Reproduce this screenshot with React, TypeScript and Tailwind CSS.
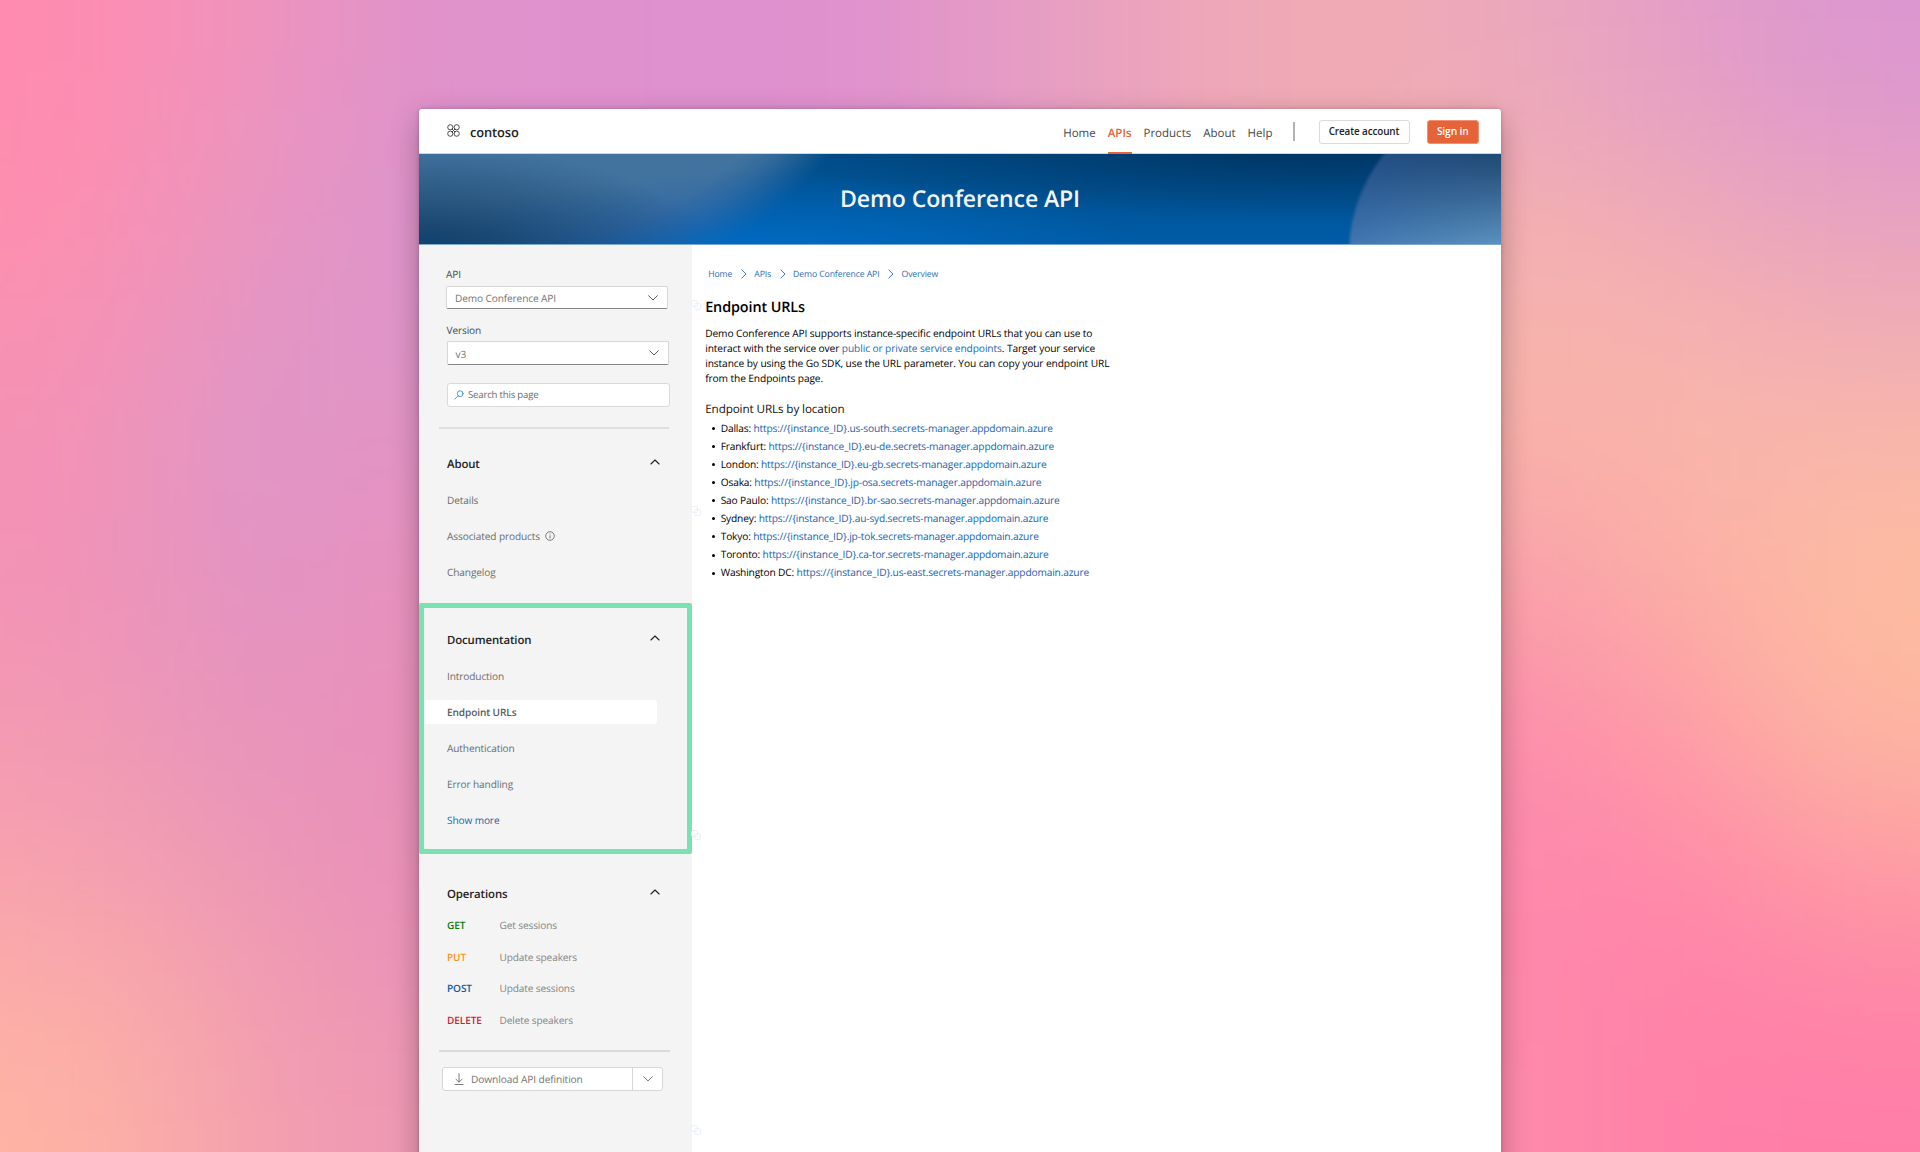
import React from 'react';

const meshColors: string[] = [
  '#ff8bb0', '#f095bc', '#e092ca', '#df92cd', '#de8fd0', '#df92cd', '#e79ec3', '#eea7b9', '#f0acb2', '#eca8bd', '#e49ec6', '#dc97d0',
  '#fd90b0', '#e896be', '#dc94cd', '#dd92cd', '#dd92cd', '#df92cd', '#e79ec3', '#eea7b9', '#f0acb2', '#f6b2ae', '#f2acb4', '#eba5bd',
  '#f592b4', '#de97c9', '#e293c5', '#e293c5', '#e293c5', '#e293c5', '#e79ec3', '#eea7b9', '#f4b0b0', '#fab4a9', '#f9b6aa', '#f7b5ad',
  '#f392b5', '#e095c5', '#e991bd', '#e991bd', '#e991bd', '#e991bd', '#eea7b9', '#eea7b9', '#f8a6ac', '#fa9fab', '#fbb0a6', '#febca0',
  '#f39ab3', '#e694bc', '#e990ba', '#e990ba', '#e990ba', '#e990ba', '#eea7b9', '#f4a0ae', '#fd8cac', '#fd8cac', '#fe9aa6', '#fdb7a2',
  '#f9a4ad', '#ef9ab4', '#ea90b9', '#ea90b9', '#ea90b9', '#ea90b9', '#ee97b9', '#f494ae', '#fd88ae', '#fe88ac', '#ff84aa', '#fe94a5',
  '#feb3a4', '#f5a1ae', '#ee97b5', '#ee97b5', '#ee97b5', '#ee97b5', '#ee97b5', '#f497ae', '#fe90aa', '#fe8bab', '#ff7fa8', '#ff7ea8',
];

const regions: [string, string][] = [
  ['Dallas', 'us-south'],
  ['Frankfurt', 'eu-de'],
  ['London', 'eu-gb'],
  ['Osaka', 'jp-osa'],
  ['Sao Paulo', 'br-sao'],
  ['Sydney', 'au-syd'],
  ['Tokyo', 'jp-tok'],
  ['Toronto', 'ca-tor'],
  ['Washington DC', 'us-east'],
];

const operations: [string, string, string][] = [
  ['GET', 'text-[#107c10]', 'Get sessions'],
  ['PUT', 'text-[#ff9214]', 'Update speakers'],
  ['POST', 'text-[#1058a8]', 'Update sessions'],
  ['DELETE', 'text-[#cf1f33]', 'Delete speakers'],
];

type IconProps = { className?: string };

function Chevron({ className = '' }: IconProps) {
  return (
    <svg viewBox="0 0 10 6" className={`h-[6px] w-[10px] ${className}`} fill="none" stroke="currentColor" strokeWidth=".9" strokeLinecap="round" strokeLinejoin="round">
      <path d="M.7.7 5 5 9.3.7" />
    </svg>
  );
}

function ChevronUp() {
  return (
    <svg viewBox="0 0 10 6" className="h-[6px] w-[10px] text-[#222]" fill="none" stroke="currentColor" strokeWidth="1.1" strokeLinecap="round" strokeLinejoin="round">
      <path d="M.9 5 5 1l4.100 4" />
    </svg>
  );
}

function CrumbArrow({ className = '' }: IconProps) {
  return (
    <svg viewBox="0 0 6 10" className={`h-[10px] w-[6px] ${className}`} fill="none" stroke="#2a6db5" strokeWidth=".9" strokeLinecap="round" strokeLinejoin="round">
      <path d="M.8.9 5 5 .8 9.100" />
    </svg>
  );
}

function Logo() {
  return (
    <svg viewBox="0 0 13 13" className="-mt-px h-[13px] w-[13px]" fill="none" stroke="#3b3b3b" strokeWidth=".9">
      <circle cx="3.300" cy="3.300" r="2.600" />
      <circle cx="9.700" cy="3.300" r="2.600" />
      <circle cx="3.300" cy="9.700" r="2.600" />
      <circle cx="9.700" cy="9.700" r="2.600" />
      <path d="m4.800 4.800 3.400 3.400M8.200 4.800 4.800 8.200" />
    </svg>
  );
}

function SearchIcon() {
  return (
    <svg viewBox="0 0 10 10" className="h-[10px] w-[10px]" fill="none" stroke="#2f8fd8" strokeWidth=".9" strokeLinecap="round">
      <circle cx="6.200" cy="3.700" r="2.900" />
      <path d="M4.100 5.800.7 9.200" />
    </svg>
  );
}

function InfoIcon() {
  return (
    <svg viewBox="0 0 10 10" className="-mt-px h-[10px] w-[10px]" fill="none" stroke="#5c5c5c" strokeWidth=".8">
      <circle cx="5" cy="5" r="4.300" />
      <path d="M5 4.400v3M5 2.600v.9" />
    </svg>
  );
}

function DownloadIcon() {
  return (
    <svg viewBox="0 0 10 12" className="h-[12px] w-[10px]" fill="none" stroke="#6b6b6b" strokeWidth=".9">
      <path d="M5 .3v8.900M1.700 6 5 9.200 8.300 6M.6 11.500h8.800" />
    </svg>
  );
}

function CopyMark({ className }: { className: string }) {
  return (
    <svg viewBox="0 0 10 10" className={`absolute h-[10px] w-[10px] ${className}`} fill="none" stroke="#e6edf5" strokeWidth=".9">
      <rect x=".6" y=".6" width="5.800" height="5.800" rx="1" />
      <rect x="3.600" y="3.600" width="5.800" height="5.800" rx="1" />
    </svg>
  );
}

function SectionTitle({ children, className }: { children: React.ReactNode; className: string }) {
  return (
    <div className={`flex h-5 items-center justify-between text-[11.400px] font-semibold text-[#222] ${className}`}>
      <h3 className="pt-[2px]">{children}</h3>
      <span className="-mt-[4px] pr-px"><ChevronUp /></span>
    </div>
  );
}

function Row({ children, className = 'text-[#6c6c6c]' }: { children: React.ReactNode; className?: string }) {
  return <li className={`flex h-9 items-center ${className}`}>{children}</li>;
}

function Select({ children, className }: { children: React.ReactNode; className: string }) {
  return (
    <div className={`flex w-[222px] items-center justify-between rounded-[2px] border border-[#d6d6d6] border-b-[#858585] bg-white pr-[9px] pl-2 text-[10.100px] text-[#757575] ${className}`}>
      <span className="pt-[3px]">{children}</span>
      <Chevron className="text-[#4a4a4a]" />
    </div>
  );
}

export default function App() {
  return (
    <div className="relative h-[1152px] w-[1920px] overflow-hidden bg-[#e991bd] pt-[109px] font-['Open_Sans','Noto_Sans',sans-serif] tracking-[-0.007em] [text-rendering:geometricPrecision]">
      <div className="absolute -inset-[240px] grid grid-cols-[400px_repeat(10,160px)_400px] grid-rows-[405px_repeat(5,164.400px)_405px] blur-[85px]">
        {meshColors.map((color, i) => (
          <span key={i} style={{ backgroundColor: color }} />
        ))}
      </div>

      <div className="relative mx-auto flex h-[1100px] w-[1082px] flex-col rounded-t-[3px] bg-white shadow-[0_10px_30px_rgba(0,0,0,0.28),0_0_4px_rgba(0,0,0,0.2)]">
        <header className="flex h-[45px] shrink-0 items-center border-b border-[#cfd6de] pr-[22.500px] pl-[27.500px]">
          <Logo />
          <span className="mt-[3.500px] ml-[10.500px] text-[12.900px] font-semibold text-[#222]">contoso</span>
          <nav className="ml-auto flex h-full items-center gap-[12px] text-[11.500px] tracking-normal text-[#484848]">
            <span className="mt-[4.500px]">Home</span>
            <span className="relative flex h-full items-center pt-[4.500px] font-semibold text-[#e56336]">
              APIs
              <i className="absolute inset-x-0 -bottom-px h-[2.500px] bg-[#e56336]" />
            </span>
            <span className="mt-[4.500px]">Products</span>
            <span className="mt-[4.500px]">About</span>
            <span className="mt-[4.500px]">Help</span>
          </nav>
          <span className="ml-[20.500px] h-[19px] w-[1.500px] bg-[#b3b3b3]" />
          <button className="mt-px ml-[24px] flex h-6 w-[91px] items-center justify-center rounded-[3px] border border-[#dadada] text-[9.900px] font-semibold text-[#222]">Create account</button>
          <button className="mt-px ml-[17.500px] flex h-6 w-[51.500px] items-center justify-center rounded-[3px] border border-[#ee9272] bg-[#e56336] pt-px text-[10.200px] font-semibold text-white">Sign in</button>
        </header>

        <section className="relative flex h-[91px] shrink-0 items-center justify-center overflow-hidden border-b border-[#7ea9cf] bg-[radial-gradient(ellipse_560px_74px_at_900px_-8px,#003360_0%,#003360a0_35%,#00336000_100%),radial-gradient(ellipse_400px_80px_at_330px_100px,#006cc4_0%,#006cc400_100%),linear-gradient(180deg,#004f8c_0%,#005ba6_100%)]">
          <div className="absolute -top-[638px] -left-[288px] h-[776px] w-[776px] bg-[radial-gradient(ellipse_300px_110px_at_288px_740px,#0c365c_0%,#0f3a60d0_20%,#0f3a6000_100%),linear-gradient(172deg,#42739f_83%,#2f69a9_89%,#1b64b6_93%)] [mask-image:radial-gradient(circle_400px_at_center,#000_84%,#000b_90%,#0000_100%)]" />
          <div className="absolute top-[-60px] left-[930px] h-[320px] w-[320px] rounded-full bg-[linear-gradient(105deg,#2456a090_0%,#2456a000_45%),linear-gradient(180deg,#234a72_19%,#3f6d98_33%,#5f93c0_47%)] opacity-95 blur-[1.500px]" />
          <h1 className="relative -mt-px text-[23.100px] font-semibold tracking-[-0.006em] text-[#f4f7fa]">Demo Conference API</h1>
        </section>

        <div className="relative flex min-h-0 flex-1">
          <aside className="flex w-[272.500px] shrink-0 flex-col bg-[#f4f4f4] pt-[21px] text-[10.100px]">
            <div className="pl-[27px]">
              <label className="block h-4 leading-4 text-[#484848]">API</label>
              <Select className="mt-1 h-[23px]">Demo Conference API</Select>
              <label className="mt-[13px] block h-4 pl-[.5px] leading-4 text-[#484848]">Version</label>
              <Select className="mt-[3px] ml-[.5px] h-6">v3</Select>
              <div className="mt-[17.500px] ml-[.5px] flex h-6 w-[223px] items-center gap-[4.500px] rounded-[3px] border border-[#dadada] bg-white pl-[6px] text-[9.600px] tracking-[-0.02em] text-[#6c6c6c]">
                <SearchIcon />
                <span className="pt-[2px]">Search this page</span>
              </div>
            </div>
            <hr className="mt-[20.500px] ml-[19.500px] h-[1.500px] w-[230.500px] border-0 bg-[#dfdfdf]" />

            <SectionTitle className="mt-[25px] pr-[31px] pl-[28px]">About</SectionTitle>
            <ul className="mt-[9px] pl-[28px]">
              <Row>Details</Row>
              <Row><span className="mr-[5px]">Associated products</span><InfoIcon /></Row>
              <Row>Changelog</Row>
            </ul>

            <div className="mt-[12.500px] h-[250.500px] shrink-0 rounded-[2px] border-[5px] border-[#7ae1b0] pt-[22px]">
              <SectionTitle className="pr-[26px] pl-[23px]">Documentation</SectionTitle>
              <ul className="mt-[8.500px]">
                <Row className="pl-[23px] text-[#6c6c6c]">Introduction</Row>
                <Row className="font-semibold text-[#5a5a5a]">
                  <span className="-mt-px flex h-6 w-[232.500px] items-center rounded-r-[3px] bg-white pt-[2px] pl-[23px]">Endpoint URLs</span>
                </Row>
                <Row className="pl-[23px] text-[#6c6c6c]">Authentication</Row>
                <Row className="pl-[23px] text-[#6c6c6c]">Error handling</Row>
                <Row className="pl-[23px] text-[#1b62ab]">Show more</Row>
              </ul>
            </div>

            <SectionTitle className="mt-[30px] pr-[31px] pl-[28px]">Operations</SectionTitle>
            <ul className="mt-[6px] pl-[28px]">
              {operations.map(([verb, color, label]) => (
                <li key={verb} className="flex h-[31.600px] items-center pt-[.4px]">
                  <span className={`w-[52.500px] font-semibold ${color}`}>{verb}</span>
                  <span className="tracking-[-0.012em] text-[#858585]">{label}</span>
                </li>
              ))}
            </ul>
            <hr className="mt-[14.500px] ml-[20px] h-[1.300px] w-[230.500px] border-0 bg-[#dadada]" />
            <div className="mt-[15px] ml-[23px] flex h-6 w-[221px] items-center rounded-[3px] border border-[#d6d6d6] bg-white text-[10.200px] text-[#757575]">
              <span className="flex h-full flex-1 items-center gap-[7.500px] pl-[10.500px]"><DownloadIcon /><span className="pt-px">Download API definition</span></span>
              <span className="flex h-full w-[30px] items-center justify-center border-l border-[#d6d6d6]"><Chevron className="text-[#6b6b6b]" /></span>
            </div>
          </aside>

          <CopyMark className="top-[55px] left-[272px]" />
          <CopyMark className="top-[261px] left-[272px]" />
          <CopyMark className="top-[585px] left-[272px]" />
          <CopyMark className="top-[880px] left-[272px]" />

          <main className="flex-1 pt-[20.500px] pl-[13.700px] text-[10.300px] text-black">
            <nav className="flex h-4 items-center pl-[3px] text-[8.700px] tracking-[-0.014em] text-[#2a6db5]">
              <span className="pt-[1.500px]">Home</span>
              <CrumbArrow className="mr-[7.500px] ml-[8.500px]" />
              <span className="pt-[1.500px]">APIs</span>
              <CrumbArrow className="mr-[7.500px] ml-[8.500px]" />
              <span className="pt-[1.500px]">Demo Conference API</span>
              <CrumbArrow className="mr-[7.500px] ml-[8.500px]" />
              <span className="pt-[1.500px]">Overview</span>
            </nav>
            <h2 className="mt-[16px] flex h-5 items-center text-[14.400px] font-semibold">Endpoint URLs</h2>
            <p className="mt-[8px] text-[10.200px] leading-[15px] tracking-[-0.010em] whitespace-nowrap">
              Demo Conference API supports instance-specific endpoint URLs that you can use to<br />
              interact with the service over <a className="text-[#1b6ab5]">public or private service endpoints</a>. Target your service<br />
              instance by using the Go SDK, use the URL parameter. You can copy your endpoint URL<br />
              from the Endpoints page.
            </p>
            <h3 className="mt-[16.500px] flex h-4 items-center text-[11.700px] text-[#111]">Endpoint URLs by location</h3>
            <ul className="mt-[1.200px] text-[10.200px] tracking-[-0.016em]">
              {regions.map(([city, host]) => (
                <li key={city} className="flex h-[18.050px] items-center pl-[6.500px] whitespace-pre">
                  <i className="mt-px mr-[6px] size-[3px] rounded-full bg-black" />
                  {city}: <a className="text-[#1b62ab]">{`https://{instance_ID}.${host}.secrets-manager.appdomain.azure`}</a>
                </li>
              ))}
            </ul>
          </main>
        </div>
      </div>
    </div>
  );
}
